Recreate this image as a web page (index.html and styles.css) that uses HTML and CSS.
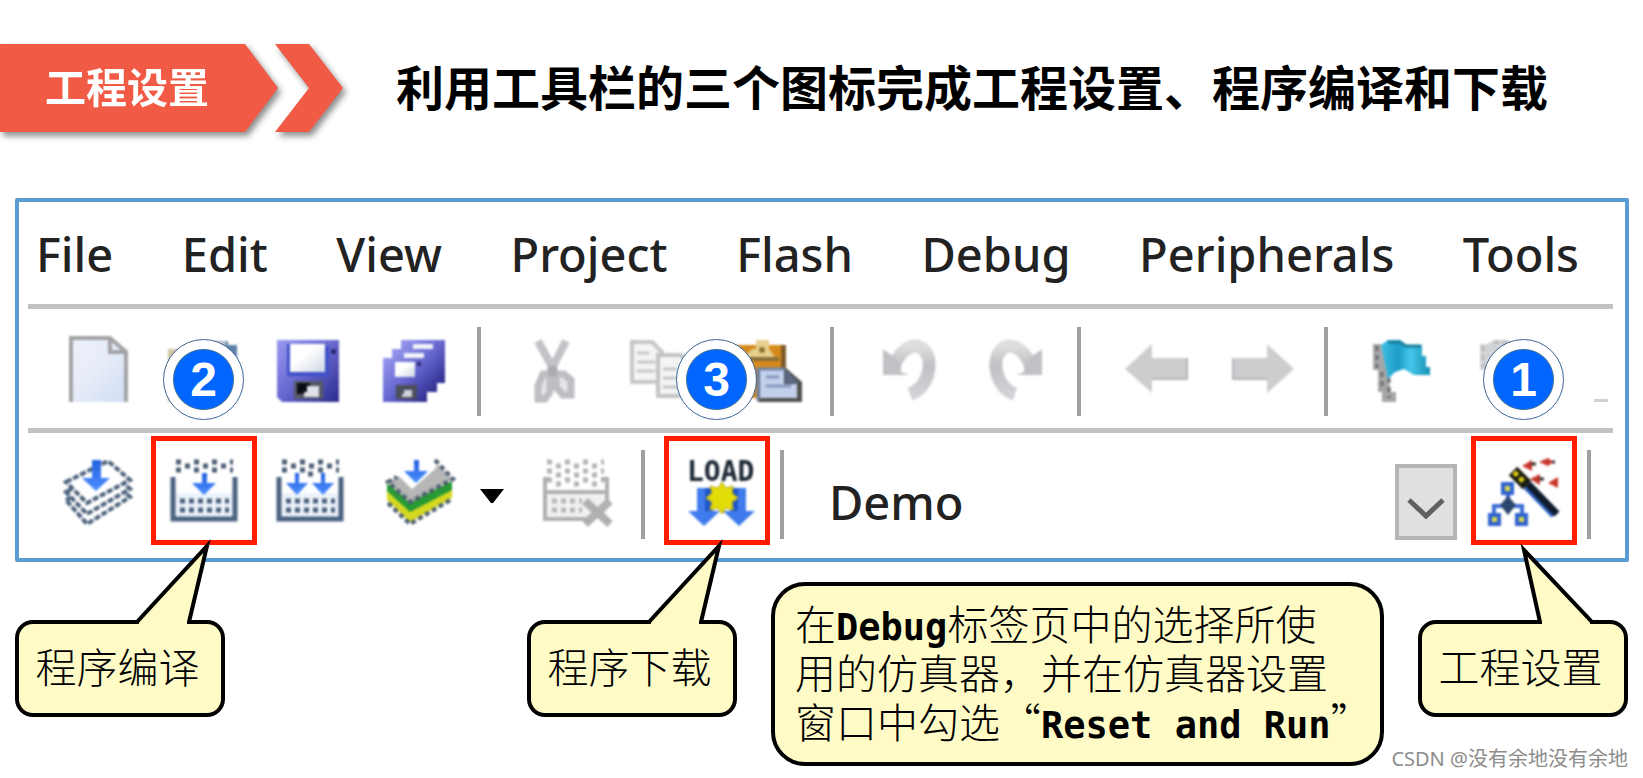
FILE: index.html
```html
<!DOCTYPE html>
<html lang="zh-CN">
<head>
  <meta charset="UTF-8" />
  <meta name="viewport" content="width=device-width, initial-scale=1.0"/>
  <title>工程设置</title>
  <link rel="stylesheet" href="styles.css">
</head>
<body>

  <header class="header">
    <div class="ribbon"><div class="ribbon-label">工程设置</div></div>
    <div class="ribbon"><div class="ribbon-arrow"></div></div>
    <h1>利用工具栏的三个图标完成工程设置、程序编译和下载</h1>
  </header>

  <main>
    <section class="panel">
      <nav class="menu">
        <a href="#">File</a>
        <a href="#">Edit</a>
        <a href="#">View</a>
        <a href="#">Project</a>
        <a href="#">Flash</a>
        <a href="#">Debug</a>
        <a href="#">Peripherals</a>
        <a href="#">Tools</a>
      </nav>

      <div class="toolbar toolbar-file">
        <button type="button" class="tool" aria-label="New">
          <svg class="icon" viewBox="0 0 72 72">
            <defs>
              <linearGradient id="paper" x1="0" y1="0" x2="1" y2="1"><stop offset="0" stop-color="#eef1fb"/><stop offset=".5" stop-color="#e6ecf8"/><stop offset="1" stop-color="#cfdcf4"/></linearGradient>
              <linearGradient id="disk" x1="0" y1="0" x2="1" y2="1"><stop offset="0" stop-color="#9a9af0"/><stop offset=".5" stop-color="#6666cf"/><stop offset="1" stop-color="#2c2c8c"/></linearGradient>
              <linearGradient id="label" x1="0" y1="0" x2="1" y2="1"><stop offset=".4" stop-color="#fff"/><stop offset="1" stop-color="#cfd6e4"/></linearGradient>
              <linearGradient id="grey" x1="0" y1="0" x2="0" y2="1"><stop offset="0" stop-color="#dcdee0"/><stop offset=".4" stop-color="#bfc1c4"/><stop offset="1" stop-color="#d0d2d5"/></linearGradient>
              <linearGradient id="flag" x1="0" y1="0" x2="1" y2="0"><stop offset="0" stop-color="#3fc0e4"/><stop offset=".35" stop-color="#1b9cc6"/><stop offset=".6" stop-color="#45c6ea"/><stop offset="1" stop-color="#1791b6"/></linearGradient>
              <linearGradient id="down" x1="0" y1="0" x2="0" y2="1"><stop offset="0" stop-color="#2461e0"/><stop offset="1" stop-color="#4c8eff"/></linearGradient>
            </defs>
            <path d="M9 70V6H48L64 20V70Z" fill="url(#paper)"/>
            <path d="M9 70V6H48L64 20V70M48 6V20H64" fill="none" stroke="#a3a3a6" stroke-width="4"/>
          </svg>
        </button>
        <button type="button" class="tool" aria-label="Open">
          <svg class="icon" viewBox="0 0 72 72">
            <path d="M0 17H30V70H0Z" fill="#cfc4a4"/>
            <path d="M40 9H60V13H69V28H44Z" fill="#5d7ea8"/>
            <path d="M40 9H58V14H44Z" fill="#b4bdc6"/>
          </svg>
        </button>
        <button type="button" class="tool" aria-label="Save">
          <svg class="icon" viewBox="0 0 72 72">
            <path d="M3 8H65V70H8L3 65Z" fill="url(#disk)"/>
            <path d="M13 12H16V40H51V14H55V44H13Z" fill="#3f50c8"/>
            <rect x="16" y="12" width="35" height="28" fill="url(#label)"/>
            <rect x="57" y="17" width="5" height="5" fill="#2c2c72"/>
            <rect x="20" y="49" width="29" height="18" fill="#555967"/>
            <path d="M23 51H36V62H23Z" fill="#0c0d12"/>
            <path d="M33 54H45V65H30V60H33Z" fill="#dfe2e8"/>
          </svg>
        </button>
        <button type="button" class="tool" aria-label="Save All">
          <svg class="icon" viewBox="0 0 72 72">
            <rect x="21" y="8" width="44" height="43" fill="url(#disk)"/>
            <rect x="33" y="12" width="20" height="6" fill="#f1f3fa"/>
            <rect x="12" y="17" width="45" height="43" fill="url(#disk)"/>
            <rect x="24" y="21" width="20" height="6" fill="#f1f3fa"/>
            <rect x="3" y="26" width="44" height="44" fill="url(#disk)"/>
            <rect x="15" y="30" width="20" height="15" fill="url(#label)"/>
            <rect x="37" y="30" width="4" height="4" fill="#2c2c72"/>
            <rect x="16" y="53" width="21" height="14" fill="#4c4f5c"/>
            <path d="M24 58H32V65H22V62H24Z" fill="#cfd3d8"/>
          </svg>
        </button>
        <span class="sep"></span>
        <button type="button" class="tool" aria-label="Cut">
          <svg class="icon" viewBox="0 0 72 72">
            <path d="M17 9 36 44M45 9 27 44" stroke="#c2c4c7" stroke-width="8"/>
            <path d="M22 42H29V60L24 67H17V54ZM35 42H43L50 48V63H42L35 55Z" fill="#e4e5e7" stroke="#bcbec1" stroke-width="7"/>
            <path d="M27 34H36V44H27Z" fill="#a9abae"/>
          </svg>
        </button>
        <button type="button" class="tool" aria-label="Copy">
          <svg class="icon" viewBox="0 0 72 72">
            <path d="M5 10H25L35 20V50H5Z" fill="#f3f4f5" stroke="#c6c7c9" stroke-width="4"/>
            <path d="M10 21H22M10 30H28M10 39H28" stroke="#c6c8cb" stroke-width="3"/>
            <path d="M31 23H54L64 33V64H31Z" fill="#f3f4f5" stroke="#c2c3c5" stroke-width="4"/>
            <path d="M36 37H50M36 46H58M36 55H58" stroke="#c3c5c8" stroke-width="3"/>
          </svg>
        </button>
        <button type="button" class="tool" aria-label="Paste">
          <svg class="icon" viewBox="0 0 72 72">
            <rect x="1" y="13" width="51" height="53" fill="#d68a1c"/>
            <path d="M48 13H53V40H48Z" fill="#7f5a2c"/>
            <path d="M8 28 19 17H23V8H36V17L44 28Z" fill="#e6d08e"/>
            <path d="M8 25H46V29H8Z" fill="#8a7038"/>
            <circle cx="29" cy="18" r="3" fill="#8f6f2c"/>
            <path d="M25 36H53L69 50V70H25Z" fill="#51504f"/>
            <path d="M27 37H51V52H64V66H27Z" fill="#c3d0ec"/>
            <path d="M25 69V37H52" fill="none" stroke="#7183a6" stroke-width="3"/>
            <path d="M52 37V51H66Z" fill="#5b6984"/>
            <path d="M33 45H46M33 54H58" stroke="#8397bd" stroke-width="3"/>
          </svg>
        </button>
        <span class="sep"></span>
        <button type="button" class="tool" aria-label="Undo">
          <svg class="icon" viewBox="0 0 72 72">
            <path d="M20 34C27 16 42 8 51 19C60 31 54 56 36 62" fill="none" stroke="url(#grey)" stroke-width="13"/>
            <path d="M9 17 20 25 27 34V40L35 43H9Z" fill="#bfc1c4"/>
          </svg>
        </button>
        <button type="button" class="tool" aria-label="Redo">
          <svg class="icon" viewBox="0 0 72 72">
            <path d="M51 34C44 16 29 8 20 19C11 31 17 56 35 62" fill="none" stroke="url(#grey)" stroke-width="13"/>
            <path d="M62 17 51 25 44 34V40L36 43H62Z" fill="#bfc1c4"/>
          </svg>
        </button>
        <span class="sep"></span>
        <button type="button" class="tool" aria-label="Back">
          <svg class="icon" viewBox="0 0 72 72">
            <path d="M4 37 31 12V26H67V48H31V61Z" fill="#cbcdcf"/>
            <path d="M31 47H66V26" fill="none" stroke="#b5b6b9" stroke-width="2"/>
          </svg>
        </button>
        <button type="button" class="tool" aria-label="Forward">
          <svg class="icon" viewBox="0 0 72 72">
            <path d="M67 37 40 12V26H5V48H40V61Z" fill="#cbcdcf"/>
            <path d="M40 47H6V26" fill="none" stroke="#b5b6b9" stroke-width="2"/>
          </svg>
        </button>
        <span class="sep"></span>
        <button type="button" class="tool" aria-label="Bookmark">
          <svg class="icon" viewBox="0 0 72 72">
            <path d="M5 12H13L23 60H28V70H14V60H10V38H5Z" fill="#a6a6a8"/>
            <path d="M9 14V36M14 40V58M21 46V66" stroke="#6c6b6d" stroke-width="3" stroke-dasharray="5 4"/>
            <path d="M13 13 20 8H32L38 13H54V24H58V35H62V43H46L36 37 27 40 20 47Z" fill="url(#flag)"/>
            <path d="M20 10H32L38 14H53" fill="none" stroke="#167f9c" stroke-width="3"/>
          </svg>
        </button>
        <button type="button" class="tool" aria-label="Previous Bookmark">
          <svg class="icon" viewBox="0 0 72 72">
            <path d="M6 12H13L20 8H34L40 13H58V42H36L20 48V66H14V38H6Z" fill="#d2d3d5"/>
            <path d="M9 14V36M20 10H34" stroke="#b9babc" stroke-width="3" stroke-dasharray="5 4"/>
          </svg>
        </button>
        <span class="more"></span>
      </div>

      <div class="toolbar toolbar-build">
        <button type="button" class="tool" aria-label="Translate">
          <svg class="icon" viewBox="0 0 72 72">
            <g fill="#fff" stroke="#4c627c" stroke-width="4" stroke-dasharray="6 2">
              <path d="M4 45 46 23 68 42 25 69Z"/>
              <path d="M4 37 46 15 68 34 25 59Z"/>
              <path d="M4 27 46 6 68 25 25 48Z"/>
            </g>
            <path d="M30 5H39V23H48L34 36 20 23H30Z" fill="url(#down)"/>
          </svg>
        </button>
        <button type="button" class="tool marked" aria-label="Build">
          <svg class="icon" viewBox="0 0 72 72">
            <path d="M8 7H65M8 15H65" stroke="#4c5d74" stroke-width="5" stroke-dasharray="5 13"/>
            <path d="M17 11H58" stroke="#4c5d74" stroke-width="5" stroke-dasharray="5 13"/>
            <rect x="5" y="38" width="62" height="25" fill="#edf2fb"/>
            <path d="M12 46H61M12 55H61" stroke="#4c617c" stroke-width="5" stroke-dasharray="5 4"/>
            <path d="M5 22V64H67V22" fill="none" stroke="#4a6280" stroke-width="5"/>
            <path d="M34 18H39V28H48L36 40 24 28H34Z" fill="url(#down)"/>
          </svg>
          <span class="badge">2</span>
        </button>
        <button type="button" class="tool" aria-label="Rebuild">
          <svg class="icon" viewBox="0 0 72 72">
            <path d="M8 7H65M8 15H65" stroke="#4c5d74" stroke-width="5" stroke-dasharray="5 13"/>
            <path d="M17 11H58M34 19H39" stroke="#4c5d74" stroke-width="5" stroke-dasharray="5 13"/>
            <rect x="5" y="38" width="62" height="25" fill="#edf2fb"/>
            <path d="M12 46H61M12 55H61" stroke="#4c617c" stroke-width="5" stroke-dasharray="5 4"/>
            <path d="M5 22V64H67V22" fill="none" stroke="#4a6280" stroke-width="5"/>
            <path d="M21 18H25V28H34L23 40 12 28H21ZM47 18H51V28H60L49 40 38 28H47Z" fill="url(#down)"/>
          </svg>
        </button>
        <button type="button" class="tool tool-batch" aria-label="Batch Build">
          <svg class="icon" viewBox="0 0 72 72">
            <path d="M4 45 27 67 69 43V34L27 56 4 36Z" fill="#d5d820"/>
            <path d="M4 36 27 57 69 35V26L27 47 4 28Z" fill="#269a33"/>
            <path d="M5 27 16 21 29 34 55 10 70 24 27 48Z" fill="#b6b6b6"/>
            <path d="M16 21 29 34 52 14V6L40 12Z" fill="#fff"/>
            <path d="M52 5 70 24 27 47 5 27 14 22M5 48 27 69 69 44" fill="none" stroke="#4d5f70" stroke-width="4" stroke-dasharray="5 3"/>
            <path d="M31 5H36V16H45L33 28 21 16H31Z" fill="url(#down)"/>
          </svg>
        </button>
        <button type="button" class="tool-caret" aria-label="Batch Build options">
          <svg class="icon-caret" viewBox="0 0 24 14"><path d="M0 0H24L13 14H11Z"/></svg>
        </button>
        <button type="button" class="tool" aria-label="Stop Build">
          <svg class="icon" viewBox="0 0 72 72">
            <path d="M5 7H62M5 16H62" stroke="#b4b4b4" stroke-width="5" stroke-dasharray="5 13"/>
            <path d="M14 11H56M14 20H56M14 29H56" stroke="#b4b4b4" stroke-width="5" stroke-dasharray="5 13"/>
            <path d="M5 25H62" stroke="#b4b4b4" stroke-width="5" stroke-dasharray="5 13"/>
            <path d="M3 38H65V64H3Z" fill="#f1f1f2"/>
            <path d="M10 46H40M10 55H40" stroke="#b6b6b6" stroke-width="5" stroke-dasharray="5 4"/>
            <path d="M8 24H3V64H44M59 24H65V46M3 37H65" fill="none" stroke="#b0b0b0" stroke-width="4"/>
            <path d="M43 46 68 69M68 46 43 69" stroke="#b0b0b0" stroke-width="8"/>
          </svg>
        </button>
        <span class="sep"></span>
        <button type="button" class="tool marked" aria-label="Download">
          <svg class="icon" viewBox="0 0 72 72">
            <path d="M16 33H32V56H39L23 71 7 56H16ZM49 33H65V56H74L58 71 42 56H49Z" fill="#3f7bec"/>
            <path d="M24 33H32V56H24ZM49 33H57V56H49Z" fill="#2356c6"/>
            <path d="M41 27 45 33 52 31 51 38 57 43 51 47 52 55 45 53 41 59 37 53 29 55 31 47 25 43 31 38 29 31 37 33Z" fill="#e3dc08" stroke="#b3aa1e" stroke-width="1"/>
            <text class="icon-text" x="6" y="26">LOAD</text>
          </svg>
          <span class="badge">3</span>
        </button>
        <span class="sep"></span>
        <div class="target">
          <select class="target-select" aria-label="Select Target">
            <option>Demo</option>
          </select>
          <svg class="target-arrow" viewBox="0 0 62 76"><rect x="2" y="2" width="58" height="72" fill="#e0e0e0" stroke="#b5b5b5" stroke-width="4"/><path d="M14 36 31 52 48 36" fill="none" stroke="#606060" stroke-width="5"/></svg>
        </div>
        <button type="button" class="tool marked" aria-label="Options for Target">
          <svg class="icon" viewBox="0 0 72 72">
            <path d="M20 38V52M6 60V51H34V60" fill="none" stroke="#3d6fd6" stroke-width="4"/>
            <g fill="#2f63cf"><rect x="13" y="27" width="13" height="13"/><rect x="0" y="58" width="13" height="13"/><rect x="27" y="58" width="13" height="13"/></g>
            <g fill="#d9d64a"><rect x="17" y="31" width="5" height="5"/><rect x="4" y="62" width="5" height="5"/><rect x="31" y="62" width="5" height="5"/></g>
            <path d="M20 41 28 50 20 60 12 50Z" fill="#2b466c"/>
            <path d="M38 31 66 60" stroke="#2e62c4" stroke-width="7"/>
            <path d="M40 29 69 59" stroke="#0d1a2c" stroke-width="7"/>
            <path d="M25 16 39 30" stroke="#1a1a12" stroke-width="12"/>
            <path d="M26 17 37 28" stroke="#d8cc10" stroke-width="5" stroke-dasharray="5 3"/>
            <path d="M34 11 44 5V16ZM51 7 60 3 65 7 60 11ZM42 24 52 19V30ZM60 28 70 22V33Z" fill="#c8352c"/>
            <path d="M43 9H48M64 7H67M51 24H56" stroke="#3b3030" stroke-width="3"/>
          </svg>
          <span class="badge">1</span>
        </button>
        <span class="sep"></span>
      </div>
    </section>

    <section class="notes">
      <div class="callout callout-first">
        <svg class="tail" viewBox="0 0 209 90"><path d="M122 90V88L192 12 174 88V90"/></svg>
        程序编译
      </div>
      <div class="callout">
        <svg class="tail" viewBox="0 0 209 90"><path d="M122 90V88L192 12 174 88V90"/></svg>
        程序下载
      </div>
      <p class="note">
        <span class="note-line">在<b>Debug</b>标签页中的选择所使</span>
        <span class="note-line">用的仿真器，并在仿真器设置</span>
        <span class="note-line">窗口中勾选“<b>Reset and Run</b>”</span>
      </p>
      <div class="callout">
        <svg class="tail" viewBox="0 0 209 90"><path d="M122 90V88L106 16 174 88V90"/></svg>
        工程设置
      </div>
    </section>
  </main>

  <footer class="watermark">CSDN @没有余地没有余地</footer>

</body>
</html>
```
FILE: styles.css
```css
* {
  box-sizing: border-box;
}

body {
  position: relative;
  margin: 0;
  min-height: 100vh;
  background-color: #fff;
  color: #000;
  font-family: "Noto Sans", "Noto Sans CJK SC", sans-serif;
}

.header {
  display: flex;
  align-items: flex-start;
  padding-top: 44px;
}

.ribbon {
  flex: none;
  filter: drop-shadow(3px 4px 3px rgba(0, 0, 0, 0.45));
}

.ribbon-label {
  width: 278px;
  height: 88px;
  padding-left: 45px;
  background-color: #f15a44;
  color: #fff;
  font-family: "Noto Sans CJK SC", sans-serif;
  font-size: 41px;
  font-weight: bold;
  line-height: 82px;
  clip-path: polygon(0 0, 245px 0, 100% 50%, 245px 100%, 0 100%);
}

.ribbon-arrow {
  width: 68px;
  height: 88px;
  margin-left: -3px;
  background-color: #f15a44;
  clip-path: polygon(0 0, 50% 0, 100% 50%, 50% 100%, 0 100%, 50% 50%);
}

h1 {
  margin: 0 0 0 53px;
  font-family: "Noto Sans CJK SC", sans-serif;
  font-size: 48px;
  line-height: 82px;
  white-space: nowrap;
}

/* uVision window */

.panel {
  margin: 66px 14px 0 15px;
  padding: 0 12px 0 9px;
  border: 4px solid #5b9bd5;
  border-radius: 2px;
}

.menu {
  display: flex;
  justify-content: space-between;
  padding: 18px 34px 16px 8px;
  border-bottom: 5px solid #c2c2c2;
}

.menu a {
  color: #222;
  font-size: 47px;
  font-weight: 500;
  line-height: 68px;
  text-decoration: none;
}

.toolbar {
  display: flex;
  align-items: flex-start;
}

.toolbar-file {
  padding: 4px 5px 6px 17px;
  border-bottom: 5px solid #c2c2c2;
}

.toolbar-build {
  padding: 3px 3px 13px 17px;
}

.tool {
  position: relative;
  flex: none;
  display: flex;
  align-items: center;
  justify-content: center;
  width: 106px;
  height: 109px;
  padding: 0;
  border: none;
  background: none;
  cursor: pointer;
}

.tool-batch {
  width: 112px;
}

.marked {
  border: 5px solid #ff1c00;
}

/* the toolbar bitmaps are enlarged, so their edges are soft */
.icon {
  flex: none;
  width: 72px;
  height: 72px;
  overflow: visible;
  filter: blur(1px);
}

.icon-text {
  fill: #1c2733;
  font-family: "DejaVu Sans Mono", monospace;
  font-size: 28px;
  font-weight: bold;
}

.tool-caret {
  flex: none;
  width: 50px;
  height: 109px;
  padding: 10px 21px 0 5px;
  border: none;
  background: none;
}

.icon-caret {
  display: block;
  width: 24px;
  height: 14px;
}

.sep {
  flex: none;
  width: 4px;
  height: 89px;
  margin: 14px 23px 0 8px;
  background-color: #a0a0a0;
}

.toolbar-build .sep {
  margin: 14px 19px 0 10px;
}

.more {
  width: 14px;
  height: 3px;
  margin: 86px 0 0 auto;
  background-color: #d2d2d2;
}

.badge {
  position: absolute;
  top: -102px;
  left: 50%;
  display: flex;
  align-items: center;
  justify-content: center;
  width: 81px;
  height: 81px;
  margin-left: -41px;
  border: 1px solid #3c6696;
  border-radius: 50%;
  background: radial-gradient(circle, #0066ff 29px, #41719c 30px, #fff 31px);
  color: #fff;
  font-family: "Liberation Sans", sans-serif;
  font-size: 48px;
  font-weight: bold;
}

.target {
  flex: 1;
  display: grid;
  padding-top: 28px;
  margin-right: 14px;
}

.target-select {
  grid-area: 1 / 1;
  width: 100%;
  height: 76px;
  padding: 0 62px 0 26px;
  border: none;
  background: none;
  appearance: none;
  color: #222;
  font-family: "Noto Sans", sans-serif;
  font-size: 47px;
  font-weight: 500;
}

.target-arrow {
  grid-area: 1 / 1;
  justify-self: end;
  width: 62px;
  height: 76px;
  pointer-events: none;
}

/* Callouts under the window */

.notes {
  display: flex;
  align-items: flex-start;
  gap: 34px;
  padding: 20px 15px 0;
  font-family: "Noto Sans CJK SC", sans-serif;
  font-size: 41px;
  font-weight: 300;
}

.callout {
  position: relative;
  flex: none;
  width: 210px;
  margin-top: 38px;
  padding: 0 5px 6px 0;
  border: 4px solid #000;
  border-radius: 18px;
  background-color: #fffbc6;
  line-height: 83px;
  text-align: center;
}

.callout-first {
  margin-right: auto;
}

.tail {
  position: absolute;
  left: -4px;
  bottom: 100%;
  width: 209px;
  height: 90px;
  fill: #fffbc6;
  stroke: #000;
  stroke-width: 4px;
  stroke-miterlimit: 10;
}

.note {
  flex: none;
  width: 613px;
  margin: 0;
  padding: 12px 20px 17px;
  border: 4px solid #000;
  border-radius: 34px;
  background-color: #fffbc6;
  line-height: 49px;
  white-space: nowrap;
}

.note-line {
  display: block;
  height: 49px;
}

.note b {
  font-family: "DejaVu Sans Mono", monospace;
  font-size: 37px;
  font-weight: bold;
  line-height: 1;
}

.watermark {
  position: absolute;
  right: 15px;
  bottom: 4px;
  color: #8c8c8c;
  font-size: 20px;
  line-height: 30px;
}
```
